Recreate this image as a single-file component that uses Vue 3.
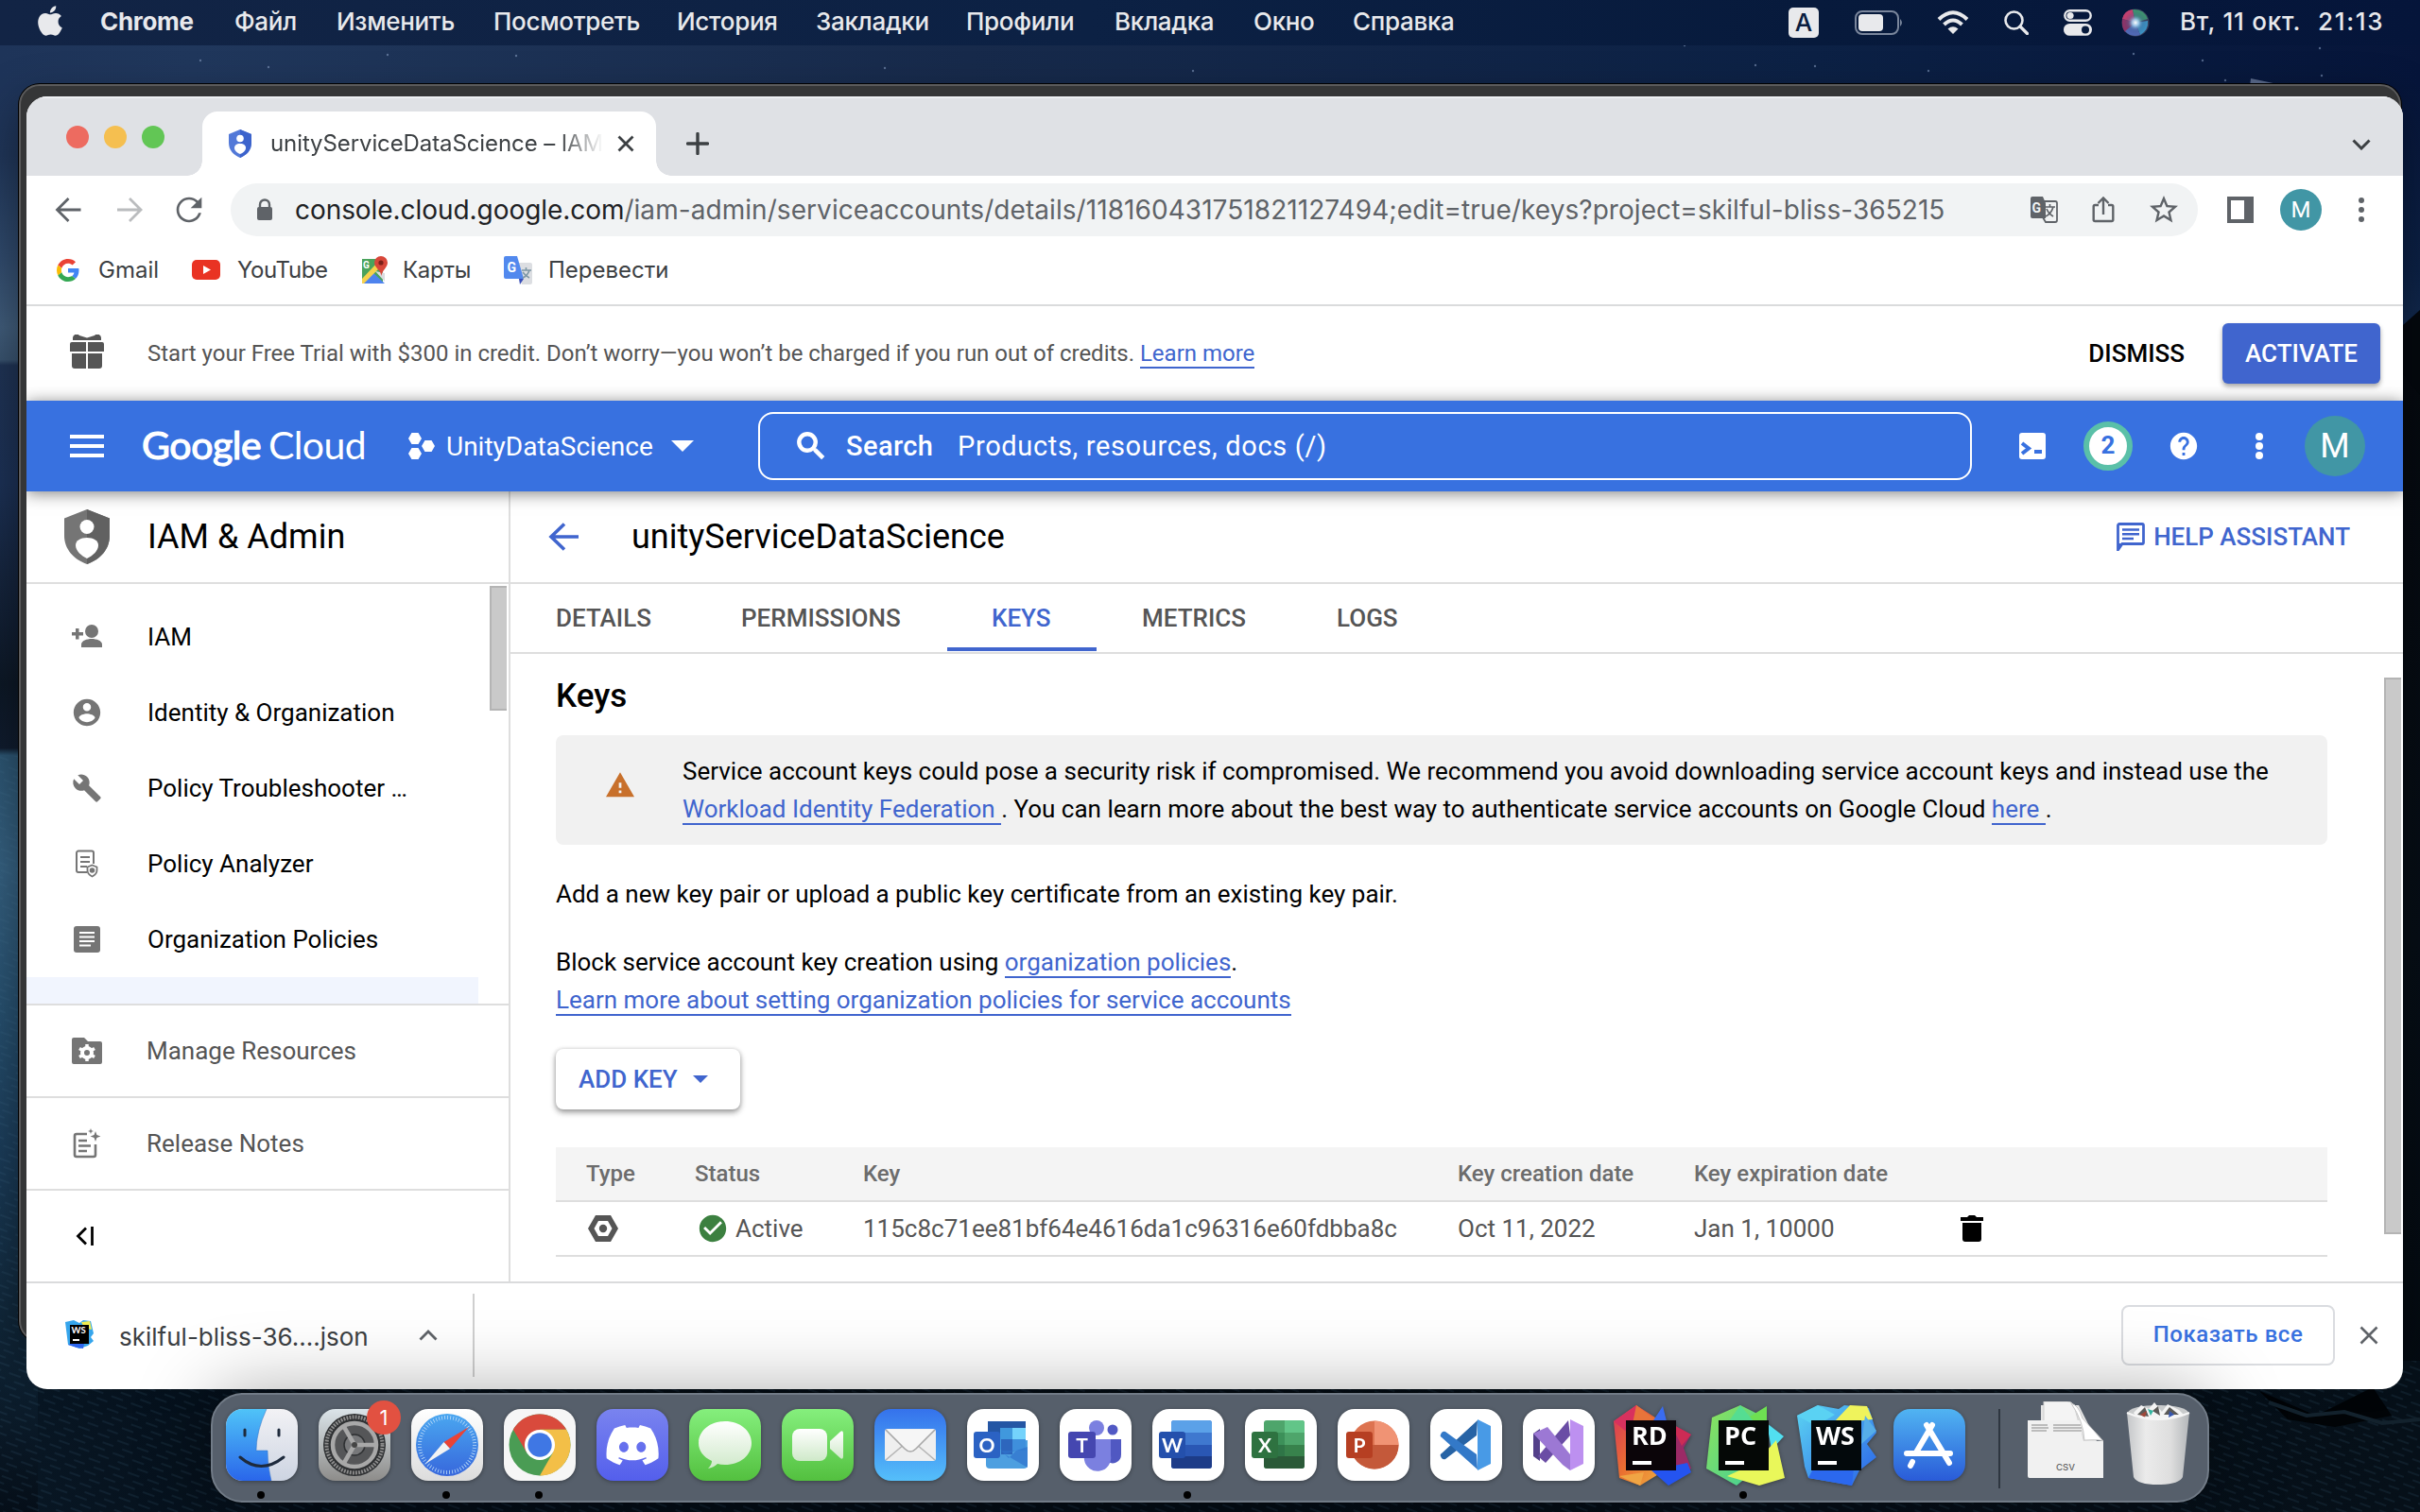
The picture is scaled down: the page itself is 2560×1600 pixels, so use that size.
<script setup>
const menu = ['Файл', 'Изменить', 'Посмотреть', 'История', 'Закладки', 'Профили', 'Вкладка', 'Окно', 'Справка']
const tabs = ['DETAILS', 'PERMISSIONS', 'KEYS', 'METRICS', 'LOGS']
const running = [0, 2, 3, 10, 16]
const slots = Array.from({ length: 19 }, (_, i) => i)
const stars = [[212, 64], [284, 71], [410, 58], [546, 59], [936, 72], [1262, 75], [1782, 48], [1857, 69], [1920, 70], [2040, 75], [2257, 57], [2330, 64], [2454, 51], [2456, 80], [2354, 85]]
</script>

<template>
  <div class="desktop">
    <svg class="wallpaper" width="2560" height="1600" viewBox="0 0 2560 1600">
      <defs>
        <linearGradient id="skyx" x1="0" x2="1" y1="0" y2="0">
          <stop offset="0" stop-color="#1e3459" /><stop offset=".08" stop-color="#20375c" /><stop offset=".4" stop-color="#172a4b" /><stop offset=".75" stop-color="#0c2145" /><stop offset="1" stop-color="#06153a" />
        </linearGradient>
        <linearGradient id="leftEdge" x1="0" x2="0" y1="0" y2="1">
          <stop offset="0" stop-color="#1e3459" /><stop offset=".05" stop-color="#203659" /><stop offset=".12" stop-color="#304a6c" />
          <stop offset=".17" stop-color="#405c7a" /><stop offset=".193" stop-color="#39536f" /><stop offset=".197" stop-color="#1f3354" />
          <stop offset=".28" stop-color="#1c3155" /><stop offset=".35" stop-color="#15243c" /><stop offset=".42" stop-color="#0d1826" />
          <stop offset=".465" stop-color="#101c2e" /><stop offset=".47" stop-color="#2c5471" /><stop offset=".55" stop-color="#356080" />
          <stop offset=".65" stop-color="#27506f" /><stop offset=".75" stop-color="#1b3c59" /><stop offset=".86" stop-color="#11283b" /><stop offset="1" stop-color="#050e18" />
        </linearGradient>
        <linearGradient id="rightEdge" x1="0" x2="0" y1="0" y2="1">
          <stop offset="0" stop-color="#06153a" /><stop offset=".13" stop-color="#0c2145" /><stop offset=".19" stop-color="#152e52" />
          <stop offset=".2" stop-color="#05090f" /><stop offset=".6" stop-color="#060e16" /><stop offset="1" stop-color="#03090f" />
        </linearGradient>
        <linearGradient id="sea" x1="0" x2="1" y1="0" y2="0">
          <stop offset="0" stop-color="#081623" /><stop offset=".12" stop-color="#040d17" /><stop offset=".5" stop-color="#040c15" /><stop offset="1" stop-color="#061019" />
        </linearGradient>
        <pattern id="ripple" width="22" height="14" patternUnits="userSpaceOnUse" patternTransform="rotate(20)">
          <path d="M0 4h13M8 11h12" stroke="#4f7c99" stroke-opacity=".13" stroke-width="2" />
        </pattern>
      </defs>
      <rect y="89" width="60" height="1511" fill="url(#leftEdge)" />
      <rect x="2500" y="89" width="60" height="1511" fill="url(#rightEdge)" />
      <rect width="2560" height="90" fill="url(#skyx)" />
      <path d="M2530 380l12-36 18-16v90z" fill="#04080e" />
      <rect y="1440" x="40" width="2520" height="160" fill="url(#sea)" />
      <rect y="1440" width="2560" height="160" fill="url(#ripple)" />
      <rect y="800" width="60" height="640" fill="url(#ripple)" />
      <path d="M2390 1472l60 26 60-30 20 30-60 12-50-8z" fill="#010407" /><path d="M2400 1484l40 14 40-4 40 12 40-4" stroke="#13222d" stroke-width="4" fill="none" />
      <path d="M2381 83l38 8h-39z" fill="#586889" />
      <circle v-for="(s, i) in stars" :key="i" :cx="s[0]" :cy="s[1]" r="1.2" fill="#8ea6c8" opacity=".55" />
    </svg>

    <header class="menubar">
      <svg class="apple" width="30" height="34" viewBox="2 -1 20 26"><path fill="#e8e9ec" d="M12.152 6.896c-.948 0-2.415-1.078-3.96-1.04-2.04.027-3.91 1.183-4.961 3.014-2.117 3.675-.546 9.103 1.519 12.09 1.013 1.454 2.208 3.09 3.792 3.039 1.52-.065 2.09-.987 3.935-.987 1.831 0 2.35.987 3.96.948 1.637-.026 2.676-1.48 3.676-2.948 1.156-1.688 1.636-3.325 1.662-3.415-.039-.013-3.182-1.221-3.22-4.857-.026-3.04 2.48-4.494 2.597-4.559-1.429-2.09-3.623-2.324-4.39-2.376-2-.156-3.675 1.09-4.61 1.09zM15.53 3.83c.843-1.012 1.4-2.427 1.245-3.83-1.207.052-2.662.805-3.532 1.818-.78.896-1.454 2.338-1.273 3.714 1.338.104 2.715-.688 3.559-1.701" /></svg>
      <nav class="menus">
        <b>Chrome</b>
        <span v-for="m in menu" :key="m">{{ m }}</span>
      </nav>
      <div class="status">
        <span class="lang">A</span>
        <svg width="52" height="26" viewBox="0 0 52 26"><rect x="1" y="1" width="45" height="24" rx="7" fill="none" stroke="#7a869c" stroke-width="2" /><rect x="4" y="4" width="26" height="18" rx="4" fill="#e8e9ec" /><path d="M48 9q4 4 0 8z" fill="#7a869c" /></svg>
        <svg width="34" height="26" viewBox="0 0 34 26" fill="none" stroke="#e8e9ec" stroke-width="4"><path d="M2 9.500Q17-5 32 9.500M7.500 15Q17 6 26.500 15" /><path d="M17 25l-5.500-5.500q5.500-4.500 11 0z" fill="#e8e9ec" stroke="none" /></svg>
        <svg width="26" height="26" viewBox="0 0 26 26" fill="none" stroke="#e8e9ec" stroke-width="2.600"><circle cx="10.500" cy="10.500" r="9" /><path d="M17 17l7.500 7.500" stroke-width="3.200" stroke-linecap="round" /></svg>
        <svg width="30" height="28" viewBox="0 0 30 28"><rect x="1.300" y="1.300" width="27.400" height="10.400" rx="5.200" fill="none" stroke="#e8e9ec" stroke-width="2.400" /><circle cx="7" cy="6.500" r="3.600" fill="#e8e9ec" /><rect y="15" width="30" height="12.800" rx="6.400" fill="#e8e9ec" /><circle cx="23" cy="21.400" r="4" fill="#071a3c" /></svg>
        <svg width="30" height="30" viewBox="0 0 30 30">
          <defs><radialGradient id="siri"><stop offset="0" stop-color="#fff" /><stop offset=".3" stop-color="#9cc9ea" stop-opacity=".9" /><stop offset=".65" stop-color="#466d9d" stop-opacity=".3" /><stop offset="1" stop-color="#2a4a80" stop-opacity="0" /></radialGradient></defs>
          <circle cx="15" cy="15" r="14.500" fill="#39405e" /><path d="M15 15L1 11Q3 2 12 1z" fill="#c04070" /><path d="M15 15L12 1q12-1 16 10z" fill="#3e8f70" /><path d="M15 15L4 25Q0 20 1 11z" fill="#8b3468" /><path d="M15 15l13-2q1 10-8 15z" fill="#3c8fc0" /><path d="M15 15l5 13q-10 3-16-4z" fill="#5068b4" /><circle cx="15" cy="15" r="12" fill="url(#siri)" />
        </svg>
        <span class="date">Вт, 11 окт.</span><span class="time">21:13</span>
      </div>
    </header>

    <div class="backwin"></div>

    <main class="win">
      <div class="strip">
        <div class="lights"><i class="r"></i><i class="y"></i><i class="g"></i></div>
        <div class="tab">
          <svg width="26" height="30" viewBox="0 0 26 30"><path d="M13 0l12 5v9c0 8-5 13-12 16C6 27 1 22 1 14V5z" fill="#5379d8" /><path d="M13 0l12 5v9c0 8-5 13-12 16z" fill="#3c63cc" /><circle cx="13" cy="9.500" r="3.800" fill="#fff" /><path d="M13 15c4 0 6 2 6 4.500 0 3-3 5.500-6 6.500-3-1-6-3.500-6-6.500C7 17 9 15 13 15z" fill="#fff" /></svg>
          <span class="tabtitle">unityServiceDataScience – IAM</span>
          <svg class="tabx" width="18" height="18" viewBox="0 0 18 18" stroke="#3c4043" stroke-width="2.800"><path d="M1.500 1.500l15 15M16.500 1.500l-15 15" /></svg>
        </div>
        <svg class="plus" width="24" height="24" viewBox="0 0 24 24" stroke="#3c4043" stroke-width="3.400" stroke-linecap="round"><path d="M12 1.500v21M1.500 12h21" /></svg>
        <svg class="chev" width="20" height="12" viewBox="0 0 20 12" fill="none" stroke="#3c4043" stroke-width="3"><path d="M1.500 1.500L10 10l8.500-8.500" /></svg>
      </div>

      <div class="toolbar">
        <svg width="40" height="40" viewBox="0 0 40 40" fill="none" stroke="#5f6368" stroke-width="2.800"><path d="M33.500 20H8.500M20.500 8L8.500 20l12 12" /></svg>
        <svg width="40" height="40" viewBox="0 0 40 40" fill="none" stroke="#babcbe" stroke-width="2.800"><path d="M7 20h25M20 8l12 12-12 12" /></svg>
        <svg width="40" height="40" viewBox="0 0 24 24" fill="#5f6368"><path d="M17.650 6.350C16.200 4.900 14.210 4 12 4c-4.420 0-7.990 3.580-7.990 8s3.570 8 7.990 8c3.730 0 6.840-2.550 7.730-6h-1.700c-.82 2.500-3.200 4.400-6.030 4.400-3.500 0-6.400-2.900-6.400-6.400s2.900-6.400 6.400-6.400c1.800 0 3.400.75 4.520 1.900L13 11h7V4l-2.350 2.350z" /></svg>
        <div class="omni">
          <svg width="20" height="24" viewBox="0 0 20 24"><path d="M5 10V6.500a5 5 0 0110 0V10" fill="none" stroke="#5f6368" stroke-width="2.400" /><rect x="2" y="9" width="16" height="14" rx="2" fill="#5f6368" /></svg>
          <span class="url"><em>console.cloud.google.com</em><span>/iam-admin/serviceaccounts/details/118160431751821127494;edit=true/keys?project=skilful-bliss-365215</span></span>
          <svg width="30" height="30" viewBox="0 0 30 30"><path d="M3 1h11l3 7v16H3a2 2 0 01-2-2V3a2 2 0 012-2z" fill="#5f6368" /><path d="M15 6h12a2 2 0 012 2v18a2 2 0 01-2 2H17l-3-5" fill="none" stroke="#5f6368" stroke-width="1.800" /><text x="2.500" y="18" font-size="14" font-weight="700" fill="#f1f3f4" font-family="Roboto, sans-serif">G</text><path d="M16 12h11M21.500 9v3M25 12q-2 7-8 10M18 14q2 5 7 8" stroke="#5f6368" stroke-width="1.700" fill="none" /></svg>
          <svg width="24" height="30" viewBox="0 0 24 30" fill="none" stroke="#5f6368" stroke-width="2.400"><path d="M7 10H3.200a1.500 1.500 0 00-1.500 1.500v14A1.500 1.500 0 003.200 27h17.600a1.500 1.500 0 001.500-1.500v-14a1.500 1.500 0 00-1.500-1.500H17M12 20V3M6.500 8L12 2.500 17.500 8" /></svg>
          <svg width="36" height="36" viewBox="0 0 24 24" fill="#5f6368"><path d="M22 9.240l-7.190-.62L12 2 9.190 8.630 2 9.240l5.460 4.730L5.820 21 12 17.270 18.180 21l-1.630-7.030L22 9.240zM12 15.400l-3.760 2.270 1-4.280-3.320-2.880 4.380-.38L12 6.100l1.710 4.040 4.380.38-3.320 2.880 1 4.280L12 15.400z" /></svg>
        </div>
        <svg width="28" height="28" viewBox="0 0 28 28"><path d="M2 2h24v24H2z" fill="none" stroke="#5f6368" stroke-width="4" /><path d="M18 2h8v24h-8z" fill="#5f6368" /></svg>
        <span class="ava small">M</span>
        <svg width="8" height="28" viewBox="0 0 8 28" fill="#5f6368"><circle cx="4" cy="4" r="3" /><circle cx="4" cy="14" r="3" /><circle cx="4" cy="24" r="3" /></svg>
      </div>

      <div class="bookmarks">
        <svg width="24" height="24" viewBox="0 0 48 48"><path fill="#ea4335" d="M24 9.500c3.540 0 6.710 1.220 9.210 3.600l6.850-6.850C35.900 2.380 30.470 0 24 0 14.620 0 6.510 5.380 2.560 13.220l7.980 6.190C12.430 13.720 17.740 9.500 24 9.500z" /><path fill="#4285f4" d="M46.980 24.550c0-1.570-.15-3.090-.38-4.550H24v9.020h12.940c-.58 2.960-2.260 5.480-4.780 7.180l7.730 6c4.510-4.180 7.090-10.360 7.090-17.650z" /><path fill="#fbbc05" d="M10.530 28.590c-.48-1.450-.76-2.990-.76-4.590s.27-3.140.76-4.590l-7.980-6.190C.92 16.460 0 20.120 0 24c0 3.880.92 7.540 2.560 10.780l7.970-6.190z" /><path fill="#34a853" d="M24 48c6.480 0 11.930-2.130 15.890-5.810l-7.730-6c-2.150 1.450-4.920 2.300-8.160 2.300-6.260 0-11.570-4.220-13.470-9.910l-7.980 6.190C6.510 42.620 14.620 48 24 48z" /></svg>
        <span class="gm">Gmail</span>
        <svg width="30" height="22" viewBox="0 0 30 22"><rect width="30" height="21" rx="5" fill="#e93323" /><path d="M12 6l8 4.500-8 4.500z" fill="#fff" /></svg>
        <span class="yt">YouTube</span>
        <svg width="30" height="30" viewBox="0 0 30 30"><path d="M2 3h22v26H2z" fill="#4aa35c" /><path d="M2 29l11-12 13 12z" fill="#4e83ee" /><path d="M2 24L20 5l4 4L4 29H2z" fill="#f7d24c" /><path d="M16 16l10 11v-9z" fill="#dadce0" /><path d="M22 0a7 7 0 017 7c0 5-6 8-6.500 14C22 15 15 12 15 7a7 7 0 017-7z" fill="#d8473a" /><circle cx="22" cy="7" r="2.600" fill="#7c2019" /><text x="3" y="13" font-size="10" font-weight="700" fill="#fff" font-family="Roboto, sans-serif">G</text></svg>
        <span class="mp">Карты</span>
        <svg width="30" height="30" viewBox="0 0 30 30"><path d="M12 7h16a2 2 0 012 2v19a2 2 0 01-2 2H19z" fill="#dcdee2" /><path d="M2 0h12l7 24H2a2 2 0 01-2-2V2a2 2 0 012-2z" fill="#5289ee" /><path d="M16 24h5l-4 6z" fill="#3a50b8" /><path d="M19 15h10M23.500 12v3M27 15q-2 6-7 8M20 17q3 4 7 6" stroke="#7d97a5" stroke-width="1.600" fill="none" /><text x="3.500" y="17" font-size="14" font-weight="700" fill="#fff" font-family="Roboto, sans-serif">G</text></svg>
        <span class="trn">Перевести</span>
      </div>

      <div class="promo">
        <svg width="36" height="36" viewBox="0 0 36 36" fill="#555"><path d="M3 4a4 4 0 017-3l8 2.500L26 1a4 4 0 017 3v2H3z" /><path d="M2 8h15v10H0v-8a2 2 0 012-2zM19 8h15a2 2 0 012 2v8H19zM2 20h15v16H5a3 3 0 01-3-3zM19 20h15v13a3 3 0 01-3 3H19z" /></svg>
        <span class="promotext">Start your Free Trial with $300 in credit. Don’t worry—you won’t be charged if you run out of credits. <a>Learn more</a></span>
        <span class="dismiss">DISMISS</span>
        <span class="activate">ACTIVATE</span>
      </div>

      <div class="cloudbar">
        <div class="burger"><i></i><i></i><i></i></div>
        <div class="logo"><b>Google</b><span>Cloud</span></div>
        <svg class="proj" width="28" height="28" viewBox="0 0 28 28" fill="#fff"><path d="M3.500 0h7L14 6l-3.500 6h-7L0 6zM3.500 16h7l3.500 6-3.500 6h-7L0 22zM17.500 8h7L28 14l-3.500 6h-7L14 14z" /></svg>
        <span class="projname">UnityDataScience</span>
        <svg width="24" height="12" viewBox="0 0 24 12" fill="#fff"><path d="M0 0h24L12 12z" /></svg>
        <div class="search">
          <svg width="38" height="38" viewBox="0 0 24 24" fill="#fff" stroke="#fff" stroke-width=".8"><path d="M15.500 14h-.79l-.28-.27C15.410 12.590 16 11.110 16 9.500 16 5.910 13.090 3 9.500 3S3 5.910 3 9.500 5.910 16 9.500 16c1.610 0 3.090-.59 4.230-1.570l.27.28v.79l5 4.990L20.490 19l-4.990-5zm-6 0C7.010 14 5 11.990 5 9.500S7.010 5 9.500 5 14 7.010 14 9.500 11.990 14 9.500 14z" /></svg>
          <b>Search</b><span>Products, resources, docs (/)</span>
        </div>
        <svg width="28" height="28" viewBox="0 0 28 28"><rect width="28" height="28" rx="3" fill="#fff" /><path d="M3 11l7 5.500L3 22" fill="none" stroke="#3871e0" stroke-width="4" /><path d="M16 18h8v4h-8z" fill="#3871e0" /></svg>
        <span class="badge">2</span>
        <svg width="34" height="34" viewBox="0 0 24 24" fill="#fff"><path d="M12 2C6.480 2 2 6.480 2 12s4.480 10 10 10 10-4.480 10-10S17.520 2 12 2zm1 17h-2v-2h2v2zm2.070-7.750l-.9.92C13.450 12.900 13 13.500 13 15h-2v-.5c0-1.100.45-2.100 1.170-2.830l1.240-1.260c.37-.36.59-.86.59-1.410 0-1.100-.9-2-2-2s-2 .9-2 2H8c0-2.210 1.790-4 4-4s4 1.790 4 4c0 .88-.36 1.680-.93 2.250z" /></svg>
        <svg width="10" height="30" viewBox="0 0 10 30" fill="#fff"><circle cx="5" cy="5" r="4" /><circle cx="5" cy="15" r="4" /><circle cx="5" cy="25" r="4" /></svg>
        <span class="ava big">M</span>
      </div>

      <div class="body">
        <aside class="side">
          <div class="sidehead">
            <svg width="48" height="58" viewBox="0 0 48 58"><path d="M24 0l24 9.500V28c0 14-10 25-24 30C10 53 0 42 0 28V9.500z" fill="#757575" /><path d="M24 0l24 9.500V28c0 14-10 25-24 30z" fill="#616161" /><circle cx="24" cy="18.500" r="7.500" fill="#fff" /><path d="M24 30c7 0 12 3 12 8 0 6-6 11-12 14-6-3-12-8-12-14 0-5 5-8 12-8z" fill="#fff" /></svg>
            <span>IAM &amp; Admin</span>
          </div>
          <div class="sidelist">
            <ul>
              <li><svg width="36" height="36" viewBox="0 0 36 36" fill="#757575"><circle cx="23" cy="12" r="7" /><path d="M12 29v-3c0-4 6-6 11-6s11 2 11 6v3z" /><path d="M2 13h4V9h3.500v4H14v3.500H9.500v4H6v-4H2z" /></svg>IAM</li>
              <li><svg width="34" height="34" viewBox="0 0 24 24" fill="#757575"><path d="M12 2C6.480 2 2 6.480 2 12s4.480 10 10 10 10-4.480 10-10S17.520 2 12 2zm0 3c1.660 0 3 1.340 3 3s-1.340 3-3 3-3-1.340-3-3 1.340-3 3-3zm0 14.200c-2.500 0-4.710-1.280-6-3.220.03-1.990 4-3.080 6-3.080 1.990 0 5.970 1.090 6 3.080-1.290 1.940-3.500 3.220-6 3.220z" /></svg>Identity &amp; Organization</li>
              <li><svg width="32" height="32" viewBox="0 0 24 24" fill="#757575"><path d="M22.700 19l-9.100-9.100c.9-2.300.4-5-1.500-6.900-2-2-5-2.400-7.400-1.300L9 6 6 9 1.600 4.700C.4 7.100.9 10.100 2.900 12.100c1.900 1.900 4.600 2.400 6.900 1.500l9.100 9.100c.4.4 1 .4 1.400 0l2.300-2.300c.5-.4.5-1.100.1-1.400z" /></svg>Policy Troubleshooter …</li>
              <li><svg width="26" height="30" viewBox="0 0 26 30" fill="none" stroke="#757575" stroke-width="2"><path d="M13 24H4a2 2 0 01-2-2V3.500a2 2 0 012-2h14a2 2 0 012 2V15M6 8h10M6 13h10M6 18h7" /><path d="M18.500 16.500l5 2v3.500c0 3-2 5-5 6.500-3-1.500-5-3.500-5-6.500v-3.500z" stroke-width="1.800" /><circle cx="18.500" cy="22" r="1.800" fill="#757575" /></svg>Policy Analyzer</li>
              <li><svg width="28" height="28" viewBox="0 0 28 28"><rect width="28" height="28" rx="3" fill="#757575" /><path d="M6 7h16M6 11.500h16M6 16h16M6 20.500h12" stroke="#fff" stroke-width="2" /></svg>Organization Policies</li>
              <li class="sel"></li>
            </ul>
            <i class="thumb"></i>
          </div>
          <div class="foot"><svg width="32" height="30" viewBox="0 0 32 30"><path d="M0 3a2 2 0 012-2h11l4 4h13a2 2 0 012 2v20a2 2 0 01-2 2H2a2 2 0 01-2-2z" fill="#757575" /><circle cx="16" cy="17" r="5" fill="none" stroke="#fff" stroke-width="4" /><path d="M16 8v4M16 22v4M8 12.500l3.500 2M20.500 19.500l3.500 2M8 21.500l3.500-2M20.500 14.500l3.500-2" stroke="#fff" stroke-width="3.500" /></svg><span>Manage Resources</span></div>
          <div class="foot"><svg width="30" height="32" viewBox="0 0 30 32"><path d="M15 6H4a2 2 0 00-2 2v20a2 2 0 002 2h18a2 2 0 002-2V17" fill="none" stroke="#757575" stroke-width="2.600" /><path d="M6 13h9M6 18.500h13M6 24h9" stroke="#757575" stroke-width="2.600" /><path d="M24 3l1.400 4 4 1.500-4 1.500L24 14l-1.400-4-4-1.500 4-1.500zM19 0l.8 2.200L22 3l-2.200.8L19 6l-.8-2.200L16 3l2.200-.8z" fill="#757575" /></svg><span>Release Notes</span></div>
          <div class="foot last"><svg width="20" height="20" viewBox="0 0 20 20" fill="none" stroke="#000" stroke-width="2.800"><path d="M11 1.500L2.500 10l8.500 8.500M17.500 0v20" /></svg></div>
        </aside>

        <section class="page">
          <div class="pagehead">
            <svg width="32" height="30" viewBox="0 0 32 30" fill="none" stroke="#4065ce" stroke-width="3.600"><path d="M32 15H3M17 1.500L3 15l14 13.500" /></svg>
            <h1>unityServiceDataScience</h1>
            <svg width="30" height="30" viewBox="0 0 30 30"><path d="M1.500 29V3A1.500 1.500 0 013 1.500h24A1.500 1.500 0 0128.500 3v18a1.500 1.500 0 01-1.500 1.500H6z" fill="none" stroke="#4065ce" stroke-width="2.800" /><path d="M1 22h6l-6 7z" fill="#4065ce" /><path d="M6 7.500h18M6 12.200h18M6 17h12" stroke="#4065ce" stroke-width="2.600" /></svg>
            <span class="help">HELP ASSISTANT</span>
          </div>
          <nav class="tabs"><span v-for="t in tabs" :key="t" :class="[t.toLowerCase(), { on: t === 'KEYS' }]">{{ t }}</span></nav>
          <div class="content">
            <h2>Keys</h2>
            <div class="notice">
              <svg width="30" height="30" viewBox="1 1 22 22" fill="#c8702b"><path d="M1 21h22L12 2 1 21zm12-3h-2v-2h2v2zm0-4h-2v-4h2v4z" /></svg>
              <div>
                <p class="n1">Service account keys could pose a security risk if compromised. We recommend you avoid downloading service account keys and instead use the</p>
                <p class="n2"><a>Workload Identity Federation </a>. You can learn more about the best way to authenticate service accounts on Google Cloud <a>here </a>.</p>
              </div>
            </div>
            <p class="p1">Add a new key pair or upload a public key certificate from an existing key pair.</p>
            <p class="p2">Block service account key creation using <a>organization policies</a>.</p>
            <p class="p3"><a>Learn more about setting organization policies for service accounts</a></p>
            <div class="addkey"><span>ADD KEY</span><svg width="16" height="8" viewBox="0 0 16 8" fill="#4065ce"><path d="M0 0h16L8 8z" /></svg></div>
            <div class="table">
              <div class="tr head"><span>Type</span><span>Status</span><span>Key</span><span>Key creation date</span><span>Key expiration date</span></div>
              <div class="tr row">
                <span><svg class="hex" width="32" height="28" viewBox="0 0 32 28"><path fill-rule="evenodd" fill="#555" d="M8 0h16l8 14-8 14H8L0 14zM11 6L6.500 14 11 22h10l4.500-8L21 6z" /><circle cx="16" cy="14" r="4.200" fill="#555" /></svg></span>
                <span class="act"><svg width="34" height="34" viewBox="0 0 24 24"><path fill="#3c8040" d="M12 2C6.480 2 2 6.480 2 12s4.480 10 10 10 10-4.480 10-10S17.520 2 12 2zm-2 15l-5-5 1.410-1.410L10 14.170l7.590-7.590L19 8l-9 9z" /></svg><span>Active</span></span>
                <span class="key">115c8c71ee81bf64e4616da1c96316e60fdbba8c</span><span class="d1">Oct 11, 2022</span><span class="d2">Jan 1, 10000</span>
                <svg width="26" height="28" viewBox="0 0 26 28"><path d="M1 2h7l2-2h6l2 2h7v4H1zM3 8h20v17a3 3 0 01-3 3H6a3 3 0 01-3-3z" /></svg>
              </div>
            </div>
            <i class="bigthumb"></i>
          </div>
        </section>
      </div>

      <div class="downloads">
        <svg class="wsmini" width="30" height="30" viewBox="0 0 30 30"><path d="M0 2l9-2 6 3 4-3 8 1 3 13-3 4 3 4-6 5-9 3-8-3-4-1z" fill="#35a5ec" /><path d="M17 2l9-1 2 9-8-2z" fill="#f1ec50" /><path d="M3 26l7-3 10 2-1 5-7-1z" fill="#2e66ee" /><rect x="5" y="5" width="20" height="20" /><text x="6.500" y="14" font-size="9.500" font-weight="700" fill="#fff" font-family="Lato, sans-serif">WS</text><path d="M8 21h7" stroke="#fff" stroke-width="1.800" /></svg>
        <span class="file">skilful-bliss-36....json</span>
        <svg width="20" height="12" viewBox="0 0 20 12" fill="none" stroke="#5f6368" stroke-width="2.800"><path d="M1.500 10.500L10 2l8.500 8.500" /></svg>
        <i class="vline"></i>
        <span class="showall">Показать все</span>
        <svg width="20" height="20" viewBox="0 0 20 20" stroke="#5f6368" stroke-width="2.600"><path d="M1.500 1.500l17 17M18.500 1.500l-17 17" /></svg>
      </div>
    </main>

    <footer class="dock">
      <svg width="0" height="0" class="defs">
        <defs>
          <linearGradient id="gBlue" x2="0" y2="1"><stop stop-color="#4fc3f8" /><stop offset="1" stop-color="#2a66ea" /></linearGradient>
          <linearGradient id="gGrey" x2="0" y2="1"><stop stop-color="#f2f2f5" /><stop offset="1" stop-color="#cdd4e2" /></linearGradient>
          <linearGradient id="gSys" x2="0" y2="1"><stop stop-color="#dbe4e9" /><stop offset="1" stop-color="#8d8c8a" /></linearGradient>
          <linearGradient id="gWhite" x2="0" y2="1"><stop stop-color="#fff" /><stop offset="1" stop-color="#dcdcdc" /></linearGradient>
          <linearGradient id="gSaf" x2="0" y2="1"><stop stop-color="#4aa7f0" /><stop offset="1" stop-color="#3767dc" /></linearGradient>
          <linearGradient id="gDis" x2="0" y2="1"><stop stop-color="#7983ef" /><stop offset="1" stop-color="#545fec" /></linearGradient>
          <linearGradient id="gGreen" x2="0" y2="1"><stop stop-color="#85ef7d" /><stop offset="1" stop-color="#53c03f" /></linearGradient>
          <linearGradient id="gBub" x2="0" y2="1"><stop stop-color="#fff" /><stop offset="1" stop-color="#cfe9c9" /></linearGradient>
          <linearGradient id="gMail" x2="0" y2="1"><stop stop-color="#3572ec" /><stop offset="1" stop-color="#55bffa" /></linearGradient>
          <linearGradient id="gApp" x2="0" y2="1"><stop stop-color="#50b4f2" /><stop offset="1" stop-color="#2a5bd8" /></linearGradient>
          <linearGradient id="gTrash" x2="1" y2="0"><stop stop-color="#c4c6c8" /><stop offset=".3" stop-color="#ebebeb" /><stop offset=".7" stop-color="#dedede" /><stop offset="1" stop-color="#b4b7ba" /></linearGradient>
          <linearGradient id="gRd" x2="1" y2="1"><stop stop-color="#d8315e" /><stop offset=".5" stop-color="#ea7030" /><stop offset="1" stop-color="#f0b040" /></linearGradient>
          <linearGradient id="gPc" x2="1" y2="1"><stop stop-color="#8fe35a" /><stop offset="1" stop-color="#3fce9a" /></linearGradient>
          <linearGradient id="gWs" x2="1" y2="1"><stop stop-color="#5cd5f2" /><stop offset="1" stop-color="#2a62e8" /></linearGradient>
        </defs>
      </svg>
      <div v-for="i in slots" :key="i" class="slot">
        <svg width="76" height="76" viewBox="0 0 76 76">
          <template v-if="i === 0">
            <rect width="76" height="76" rx="18" fill="url(#gGrey)" /><path d="M18 0H43Q32 24 32 44H44Q44 60 48 76H18A18 18 0 010 58V18A18 18 0 0118 0z" fill="url(#gBlue)" />
            <path d="M43 0Q32 24 32 44H44Q44 60 48 76" stroke="#2d6fc4" stroke-width="1" stroke-opacity=".5" fill="none" />
            <path d="M20 22v6M56 22v6M15 51Q37 70 61 51" stroke="#1e2a3c" stroke-width="3" stroke-linecap="round" fill="none" />
          </template>
          <template v-else-if="i === 1">
            <rect width="76" height="76" rx="18" fill="url(#gSys)" /><circle cx="38" cy="38" r="33" fill="#2f3133" /><circle cx="38" cy="38" r="29.500" fill="none" stroke="#8e8e8e" stroke-width="4" stroke-dasharray="1.800 1.300" /><circle cx="38" cy="38" r="23" fill="#555658" stroke="#a8a8a8" stroke-width="4.500" /><circle cx="38" cy="38" r="11" fill="#77787a" stroke="#2f3133" stroke-width="1.500" /><path d="M38 38h22M38 38L27 19M38 38L27 57" stroke="#a8a8a8" stroke-width="4.500" /><circle cx="38" cy="38" r="3" fill="#444" />
          </template>
          <template v-else-if="i === 2">
            <rect width="76" height="76" rx="18" fill="url(#gWhite)" /><circle cx="38" cy="38" r="33" fill="url(#gSaf)" /><circle cx="38" cy="38" r="29" fill="none" stroke="#bcdcf8" stroke-width="4" stroke-dasharray=".8 2.237" /><path d="M61 19L34.500 35l6.500 7z" fill="#ea4335" /><path d="M15 58L34.500 35l6.500 7z" fill="#f3f3f3" />
          </template>
          <template v-else-if="i === 3">
            <rect width="76" height="76" rx="18" fill="#f6f6f6" /><circle cx="38" cy="38" r="32.500" fill="#4a9c54" /><path d="M9.900 21.700A32.500 32.500 0 0166.100 21.700H38L24 46z" fill="#d94a3c" /><path d="M66.100 21.700A32.500 32.500 0 0138 70.500L52 46 38 21.700z" fill="#f3bf47" /><circle cx="38" cy="38" r="16" fill="#fff" /><circle cx="38" cy="38" r="12.700" fill="#3f77e4" />
          </template>
          <template v-else-if="i === 4">
            <rect width="76" height="76" rx="18" fill="url(#gDis)" /><path transform="translate(10.500 10.500) scale(2.300)" fill="#fff" d="M20.317 4.370a19.790 19.790 0 00-4.885-1.515.074.074 0 00-.079.037c-.211.375-.445.865-.608 1.250-1.845-.276-3.680-.276-5.487 0-.164-.393-.406-.874-.618-1.250a.077.077 0 00-.078-.037 19.736 19.736 0 00-4.885 1.515.07.07 0 00-.032.028C.533 9.046-.319 13.580.099 18.058a.082.082 0 00.031.056c2.053 1.508 4.041 2.423 5.993 3.029a.078.078 0 00.084-.028c.462-.63.873-1.295 1.226-1.994a.076.076 0 00-.042-.106c-.653-.248-1.274-.55-1.872-.892a.077.077 0 01-.008-.128c.126-.094.252-.192.372-.291a.074.074 0 01.078-.011c3.928 1.793 8.180 1.793 12.061 0a.074.074 0 01.079.01c.12.099.246.198.373.292a.077.077 0 01-.007.128 12.299 12.299 0 01-1.873.891.077.077 0 00-.041.107c.36.698.772 1.363 1.225 1.993a.076.076 0 00.084.029c1.961-.607 3.950-1.522 6.002-3.029a.077.077 0 00.031-.055c.5-5.177-.838-9.674-3.548-13.660a.061.061 0 00-.031-.029zM8.020 15.331c-1.183 0-2.157-1.086-2.157-2.419 0-1.333.956-2.419 2.157-2.419 1.211 0 2.176 1.095 2.157 2.419 0 1.333-.956 2.419-2.157 2.419zm7.975 0c-1.183 0-2.157-1.086-2.157-2.419 0-1.333.955-2.419 2.157-2.419 1.211 0 2.176 1.095 2.157 2.419 0 1.333-.946 2.419-2.157 2.419z" />
          </template>
          <template v-else-if="i === 5">
            <rect width="76" height="76" rx="18" fill="url(#gGreen)" /><path d="M38 13c16 0 28 10 28 23S54 59 38 59q-5 0-8-1-4 4-10 5 4-4 4-8C15 51 10 44 10 36c0-13 12-23 28-23z" fill="url(#gBub)" />
          </template>
          <template v-else-if="i === 6">
            <rect width="76" height="76" rx="18" fill="url(#gGreen)" /><rect x="11" y="21" width="37" height="34" rx="8" fill="url(#gBub)" /><path d="M51 34l11-10q3-2 3 2v24q0 4-3 2L51 42z" fill="url(#gBub)" />
          </template>
          <template v-else-if="i === 7">
            <rect width="76" height="76" rx="18" fill="url(#gMail)" /><rect x="11" y="21" width="54" height="34" rx="3" fill="#efefef" /><path d="M12 54l20-17M64 54L44 37" stroke="#b5b5b5" stroke-width="1.600" /><path d="M12 22l20 20q6 6 12 0l20-20" fill="#f6f6f6" stroke="#a8a8a8" stroke-width="1.600" />
          </template>
          <template v-else-if="i === 8">
            <rect width="76" height="76" rx="18" fill="#fff" /><path d="M22 13h40v18H22z" fill="#2456a4" /><path d="M20 37l44-4v26a4 4 0 01-4 4H24a4 4 0 01-4-4z" fill="#4d9fe0" /><path d="M35 20h13v23H35z" fill="#4098dd" /><path d="M48 20h14v12H48z" fill="#74d2fb" /><path d="M48 32h14v12H48z" fill="#3f8fdc" /><path d="M36 32h12v16H36z" fill="#2d66bd" /><path d="M36 44h16l-8 8zM40 48l24 14V40z" fill="#2f72cc" opacity=".7" /><rect x="7" y="24" width="28" height="28" rx="3" fill="#2b62c3" /><text x="21" y="46" text-anchor="middle" class="ol">O</text>
          </template>
          <template v-else-if="i === 9">
            <rect width="76" height="76" rx="18" fill="#fff" /><circle cx="39" cy="20" r="8" fill="#7b80e0" /><circle cx="56" cy="22" r="5.500" fill="#5159c4" /><path d="M50 32h15v16a9 9 0 01-15 7z" fill="#5058c2" /><path d="M24 32h30v17a14 14 0 01-28 5z" fill="#7b80e0" /><rect x="9" y="24" width="29" height="28" rx="3" fill="#4547b0" /><text x="23.500" y="46" text-anchor="middle" class="ol">T</text>
          </template>
          <template v-else-if="i === 10">
            <rect width="76" height="76" rx="18" fill="#fff" /><rect x="20" y="12" width="43" height="51" rx="3" fill="#3f78cf" /><path d="M20 25V15a3 3 0 013-3h37a3 3 0 013 3v10z" fill="#5ba1e8" /><path d="M20 38h43v12H20z" fill="#2a57b4" /><path d="M20 50h43v10a3 3 0 01-3 3H23a3 3 0 01-3-3z" fill="#1d3c88" /><rect x="7" y="24" width="28" height="28" rx="3" fill="#2450ac" /><text x="21" y="45.500" text-anchor="middle" class="ol">W</text>
          </template>
          <template v-else-if="i === 11">
            <rect width="76" height="76" rx="18" fill="#fff" /><rect x="20" y="12" width="43" height="51" rx="3" fill="#4ea56b" /><path d="M42 12h18a3 3 0 013 3v10H42z" fill="#62c588" /><path d="M20 38h43v12H20z" fill="#2f7547" /><path d="M42 25h21v13H42z" fill="#4ea56b" /><path d="M42 38h21v12H42z" fill="#38824c" /><path d="M20 50h43v10a3 3 0 01-3 3H23a3 3 0 01-3-3z" fill="#2b5a38" /><path d="M20 25h22v13H20z" fill="#3c9059" /><rect x="7" y="24" width="28" height="28" rx="3" fill="#2e7240" /><text x="21" y="46" text-anchor="middle" class="ol">X</text>
          </template>
          <template v-else-if="i === 12">
            <rect width="76" height="76" rx="18" fill="#fff" /><circle cx="39" cy="38" r="25.500" fill="#dd7350" /><path d="M39 12.500A25.500 25.500 0 0164.500 38H39z" fill="#f09374" /><path d="M13.500 38h51a25.500 25.500 0 01-51 0z" fill="#c4593a" /><rect x="9" y="24" width="28" height="28" rx="3" fill="#b63f22" /><text x="23" y="46" text-anchor="middle" class="ol">P</text>
          </template>
          <template v-else-if="i === 13">
            <rect width="76" height="76" rx="18" fill="#fff" /><path d="M50 12L49 28 16 53q-2 1-4-1l-1-2q-1-2 1-3z" fill="#2763a5" /><path d="M50 64L49 48 16 24q-2-1-4 1l-1 2q-1 2 1 3z" fill="#3379c8" /><path d="M50 11l14 7v40l-14 7z" fill="#489ae6" />
          </template>
          <template v-else-if="i === 14">
            <rect width="76" height="76" rx="18" fill="#fff" /><path d="M11 26l7-5v34l-7-5z" fill="#53408a" /><path d="M48 12l2 16L24 57l-8-7z" fill="#6a4da5" /><path d="M11 26l15-7 24 29v17l-8-6z" fill="#9c78d4" /><path d="M50 11l14 7v40l-14 7z" fill="#bd90f0" />
          </template>
          <g v-else-if="i === 15" transform="translate(-4 1)">
            <path d="M26-5L2 12l6 60 22 8 26-16-4-52z" fill="url(#gRd)" /><path d="M26-5L2 12l12 10 20-12z" fill="#d8315e" /><path d="M26-5l18 14-10 8-12-2z" fill="#e8743a" /><path d="M54-4l6 24H38z" fill="#3a6cf0" /><path d="M58 12l26 14-8 14 8 22-20 10z" fill="#9b2a66" /><path d="M62 14l22 12-10 12z" fill="#cd2c55" /><path d="M42 64l38-8 4 10-24 14z" fill="#2454f0" /><path d="M8 70l26-4-4 14z" fill="#f0a544" />
            <rect x="15" y="11" width="53" height="53" fill="#0b0509" /><text x="21" y="37" class="jb">RD</text><path d="M22 56h20" stroke="#fff" stroke-width="4" />
          </g>
          <g v-else-if="i === 16" transform="translate(-4 1)">
            <path d="M38-5L8 8 2 62l32 18 22-18 4-56z" fill="url(#gPc)" /><path d="M66-4L40 12h26z" fill="#6ee052" /><path d="M66 14l18 14-13 14z" fill="#52dff0" /><path d="M76 32l9 40-27 8-34-10 30-14z" fill="#e9f75a" /><path d="M38-5l14 17H26z" fill="#55dd92" />
            <rect x="15" y="11" width="53" height="53" fill="#050806" /><text x="21" y="37" class="jb">PC</text><path d="M22 56h20" stroke="#fff" stroke-width="4" />
          </g>
          <g v-else-if="i === 17" transform="translate(-4 1)">
            <path d="M22-5L0 6l8 54 4 12 46 8 8-16 18-14-10-14 10-12-8-26-26-3-6 4z" fill="url(#gWs)" /><path d="M56-5l18 1 6 14-18 2-24 2z" fill="#eff35c" /><path d="M72 6l12 16-16 14z" fill="#56aee8" /><path d="M22-5l18 10-20 12L0 6z" fill="#5ad2f3" /><path d="M16 64l44-2-2 18-46-8z" fill="#2b68ee" />
            <rect x="15" y="11" width="53" height="53" fill="#03090c" /><text x="20" y="37" class="jb">WS</text><path d="M22 56h20" stroke="#fff" stroke-width="4" />
          </g>
          <template v-else>
            <rect width="76" height="76" rx="18" fill="url(#gApp)" /><g stroke="#fff" stroke-width="6" stroke-linecap="round"><path d="M41 17L24 46M35 17l24 40M14 47h46M20 56l-2 4" /></g>
          </template>
        </svg>
        <span v-if="i === 1" class="count">1</span>
        <i v-if="running.includes(i)" class="dot"></i>
      </div>
      <i class="sep"></i>
      <svg class="csv" width="80" height="82" viewBox="0 0 80 82"><path d="M6 20h8v8H6z" fill="#3458d0" /><path d="M14 4h40l20 40v20H14z" fill="#e4e4e4" /><path d="M17 0h25q6 0 8 8l10 36H17z" fill="#f4f4f4" stroke="#cfcfcf" /><path d="M0 20h56l2 22h22v39H2a2 2 0 01-2-2z" fill="#f1f1f1" /><path d="M46 2q8 2 12 16l22 24q-2-2-20-1-1-20-14-39z" fill="#fff" stroke="#c8c8c8" /><path d="M4 25h17M4 28h18M4 31h16M27 25h29M27 28h30M27 31h30" stroke="#aaa" stroke-width="1.300" /><text x="40" y="73" text-anchor="middle" font-size="9.500" font-weight="500" fill="#666" font-family="Inter, sans-serif">CSV</text></svg>
      <svg class="trash" width="68" height="88" viewBox="0 0 68 88"><ellipse cx="34" cy="12" rx="32" ry="8" fill="#c9cbcc" /><path d="M8 12l8-8 8 4 6-7 8 10 6-8 12 6 6 6-12 6H14z" fill="#f4f4f4" /><path d="M12 14l8-8 4 10zM40 14l6-8 10 8zM28 10l6-5 2 10z" fill="#5b5a58" /><path d="M23 8l6 2-3 5z" fill="#35b5a0" /><path d="M46 10l5 4-6 3z" fill="#3556b0" /><path d="M15 14l7-4-2 7z" fill="#a0483a" /><path d="M1 12q33 14 66 0l-7 68q-4 8-26 8T8 80z" fill="url(#gTrash)" /><path d="M1 12q33 14 66 0" fill="none" stroke="#f6f6f6" stroke-width="2" /></svg>
    </footer>
  </div>
</template>

<style>
body { margin: 0; }
</style>

<style scoped>
* { box-sizing: border-box; }
.desktop { position: relative; width: 2560px; height: 1600px; overflow: hidden; background: #040c15; font-family: Roboto, "Liberation Sans", sans-serif; color: #000; }
svg { display: block; flex: none; }
span, b, a, em { white-space: nowrap; }
i, em { font-style: normal; }
ul, h1, h2, p { margin: 0; padding: 0; list-style: none; font-weight: 400; white-space: nowrap; }
a { color: #4065ce; border-bottom: 2px solid #4065ce; white-space: pre; }
.wallpaper { position: absolute; inset: 0; }

.menubar { position: relative; height: 48px; display: flex; align-items: center; padding: 0 38px; background: linear-gradient(90deg, #122445, #0c2144 45%, #071a3c 75%, #05153a); color: #e8e9ec; font: 500 26px/46px Inter, sans-serif; }
.apple { margin-top: -4px; margin-right: 38px; }
.menus { display: grid; grid-template-columns: 142px 108px 166px 194px 147px 159px 157px 147px 105px 120px; height: 46px; margin-top: -2px; letter-spacing: -.3px; }
.menus b { font-weight: 700; }
.status { margin-left: auto; display: flex; align-items: center; height: 48px; }
.lang { width: 32px; height: 32px; margin-right: 38px; border-radius: 5px; background: #e8e9ec; color: #0a1d40; text-align: center; font: 500 26px/32px Inter, sans-serif; }
.status svg:nth-of-type(1) { margin-right: 35px; }
.status svg:nth-of-type(2) { margin-right: 37px; }
.status svg:nth-of-type(3) { margin-right: 37px; }
.status svg:nth-of-type(4) { margin-right: 31px; }
.status svg:nth-of-type(5) { margin-right: 32px; }
.date { width: 146px; height: 48px; letter-spacing: .75px; }
.time { width: 70px; height: 48px; letter-spacing: 1.7px; }

.backwin { position: absolute; left: 20px; top: 89px; width: 2520px; height: 1331px; border-radius: 22px; background: #353637; border: 2px solid #5b5b5c; box-shadow: 0 0 0 1px #000, 0 20px 50px rgba(0, 0, 0, .4); }
.win { position: absolute; left: 28px; top: 102px; width: 2514px; height: 1368px; border-radius: 22px; overflow: hidden; background: #fff; display: flex; flex-direction: column; }
.strip { height: 84px; background: #dfe1e5; display: flex; border-top: 2px solid #eef0f3; flex: none; }
.lights { display: flex; gap: 16px; padding: 29px 0 0 42px; width: 186px; }
.lights i { width: 24px; height: 24px; border-radius: 50%; }
.lights .r { background: #ed6b60; } .lights .y { background: #f5bf50; } .lights .g { background: #62c655; }
.tab { position: relative; margin-top: 14px; width: 480px; height: 68px; border-radius: 16px 16px 0 0; background: #fff; display: flex; align-items: center; padding-left: 27px; }
.tab::before, .tab::after { content: ""; position: absolute; bottom: 0; width: 16px; height: 16px; }
.tab::before { left: -16px; background: radial-gradient(circle at 0 0, transparent 15.500px, #fff 16px); }
.tab::after { right: -16px; background: radial-gradient(circle at 100% 0, transparent 15.500px, #fff 16px); }
.tabtitle { flex: none; margin-left: 19px; width: 358px; font: 400 24px/34px Inter, sans-serif; letter-spacing: -.1px; color: #3c4043; -webkit-mask-image: linear-gradient(90deg, #000 305px, transparent 352px); mask-image: linear-gradient(90deg, #000 305px, transparent 352px); }
.tabx { margin-left: 9px; }
.plus { margin: 36px 0 0 32px; }
.chev { margin: 43px 34px 0 auto; }

.toolbar { height: 72px; display: flex; align-items: center; padding: 0 40px 0 24px; flex: none; }
.toolbar > svg:nth-of-type(1) { margin-right: 25px; }
.toolbar > svg:nth-of-type(2) { margin-right: 23px; }
.omni { flex: none; width: 2081px; height: 56px; margin: 0 31px 0 24px; border-radius: 28px; background: #f1f3f4; display: flex; align-items: center; padding-left: 26px; }
.url { flex: none; width: 1857px; margin-left: 22px; font: 400 28px/40px Inter, sans-serif; color: #5f6368; letter-spacing: .06px; }
.url em { color: #202124; letter-spacing: -.06px; }
.omni > svg:nth-of-type(2) { margin-left: -22px; margin-right: 36px; }
.omni > svg:nth-of-type(3) { margin-right: 34px; }
.ava { flex: none; border-radius: 50%; background: #4196a5; color: #fff; text-align: center; }
.small { width: 44px; height: 44px; margin: 0 auto 0 28px; font: 400 24px/44px Roboto; }

.bookmarks { height: 66px; border-bottom: 2px solid #dadbdc; display: flex; align-items: center; padding: 0 0 9px 32px; font: 400 24px/34px Inter, sans-serif; color: #3c4043; flex: none; }
.gm { width: 99px; margin-left: 20px; } .yt { width: 130px; margin-left: 18px; letter-spacing: -.4px; } .mp { width: 107px; margin-left: 15px; letter-spacing: -.3px; } .trn { margin-left: 17px; }

.promo { height: 100px; display: flex; align-items: center; padding: 0 24px 0 46px; color: #555; flex: none; }
.promo svg { margin-bottom: 4px; }
.promotext { margin-left: 46px; font-size: 24px; line-height: 36px; letter-spacing: -.01px; }
.dismiss { margin-left: auto; margin-right: 40px; color: #000; font-weight: 500; font-size: 26px; }
.activate { width: 167px; height: 64px; border-radius: 6px; background: #4065ce; color: #fff; text-align: center; font: 500 26px/64px Roboto; box-shadow: 0 3px 5px rgba(0, 0, 0, .35); }

.cloudbar { position: relative; height: 96px; background: #3871e0; color: #fff; display: flex; align-items: center; padding: 0 40px 0 46px; box-shadow: 0 2px 16px rgba(0, 0, 0, .5); flex: none; }
.burger { width: 36px; display: grid; gap: 6px; }
.burger i { height: 4px; background: #fff; }
.logo { width: 282px; margin-left: 40px; margin-top: -3px; display: flex; font: 400 41px/50px Lato, sans-serif; letter-spacing: -.6px; white-space: nowrap; }
.logo b { width: 134px; font-weight: 400; -webkit-text-stroke: 1.2px #fff; letter-spacing: -.4px; }
.projname { width: 220px; margin-left: 12px; margin-right: 18px; font-size: 28px; }
.search { width: 1284px; height: 72px; margin: 0 50px 0 68px; border: 2px solid #fff; border-radius: 16px; display: flex; align-items: center; padding-left: 35px; font-size: 29px; letter-spacing: .65px; }
.search b { font-weight: 500; margin-left: 18px; width: 118px; letter-spacing: .4px; }
.badge { width: 52px; height: 52px; margin: 0 37px 0 40px; border: 6.500px solid #5ac0a8; border-radius: 50%; background: #fff; color: #3871e0; font: 700 26px/39px Roboto; text-align: center; }
.cloudbar > svg:last-of-type { margin: 0 43px 0 58px; }
.big { width: 64px; height: 64px; font: 400 36px/64px Roboto; }

.body { height: 836px; display: grid; grid-template-columns: 512px 1fr; flex: none; }
.side { border-right: 2px solid #dedede; display: flex; flex-direction: column; }
.sidehead { height: 98px; border-bottom: 2px solid #dedede; display: flex; align-items: center; padding-left: 40px; gap: 40px; font-size: 36px; flex: none; }
.sidelist { position: relative; height: 446px; border-bottom: 2px solid #dedede; overflow: hidden; padding-top: 16px; flex: none; }
.sidelist li { height: 80px; display: grid; grid-template-columns: 128px 1fr; align-items: center; font-size: 26px; }
.sidelist li svg { justify-self: center; }
.sidelist li.sel { width: 478px; background: #f1f5fe; }
.thumb { position: absolute; right: 2px; top: 2px; width: 18px; height: 132px; background: #c9c9c9; border: 2px solid #b4b4b4; border-right: 0; }
.foot { height: 98px; border-bottom: 2px solid #dedede; display: grid; grid-template-columns: 127px 1fr; align-items: center; font-size: 26px; color: #555; flex: none; }
.foot svg { justify-self: center; }
.last { border-bottom: 0; height: 96px; grid-template-columns: 124px 1fr; }

.page { position: relative; display: flex; flex-direction: column; }
.pagehead { height: 98px; border-bottom: 2px solid #dedede; display: flex; align-items: center; padding: 0 56px 0 40px; }
.pagehead h1 { margin-left: 56px; margin-right: auto; font-size: 36px; }
.help { margin-left: 9px; color: #4065ce; font-weight: 500; font-size: 26px; }
.tabs { height: 74px; border-bottom: 2px solid #dedede; display: flex; font: 500 26px/72px Roboto; color: #555; }
.tabs span { height: 71px; padding-left: 48px; }
.details { width: 196px; } .permissions { width: 266px; } .keys { width: 158px; } .metrics { width: 206px; }
.tabs .on { color: #4065ce; border-bottom: 4px solid #4065ce; padding-left: 47px; }
.content { position: relative; padding: 0 80px 0 48px; font-size: 26px; line-height: 40px; }
h2 { font-size: 35px; font-weight: 500; line-height: 40px; margin-top: 25px; }
.notice { margin-top: 21px; width: 1874px; height: 116px; border-radius: 8px; background: #f1f1f1; display: flex; align-items: center; padding-left: 53px; }
.notice > div { margin-left: 51px; }
.notice svg { margin-top: -10px; }
.p1 { margin-top: 32px; } .p2 { margin-top: 32px; }
.addkey { margin-top: 32px; width: 195px; height: 64px; border-radius: 8px; background: #fff; box-shadow: 0 3px 6px rgba(0, 0, 0, .4), 0 0 4px rgba(0, 0, 0, .12); display: flex; align-items: center; padding-left: 24px; color: #4065ce; font-weight: 500; }
.addkey span { width: 121px; }
.table { margin-top: 40px; width: 1874px; }
.tr.head, .tr.row { display: grid; grid-template-columns: 115px 178px 629px 250px 281px 1fr; align-items: center; height: 58px; padding-left: 32px; border-bottom: 2px solid #dedede; }
.head { background: #f4f4f4; color: #6c6c6c; font-weight: 500; font-size: 24px; }
.row { color: #555; }
.hex { margin-left: 2px; }
.act { display: flex; align-items: center; gap: 7px; }
.act svg { margin-left: 2px; }
.bigthumb { position: absolute; right: 2px; top: 25px; width: 18px; height: 589px; background: #c9c9c9; border: 2px solid #b4b4b4; border-right: 0; }

.downloads { height: 112px; border-top: 2px solid #dadbdc; display: flex; align-items: center; padding: 0 26px 0 41px; font: 400 26px/40px Inter, sans-serif; color: #3c4043; flex: none; }
.wsmini { margin-bottom: 2px; }
.file { width: 317px; margin: 3px 0 0 27px; }
.vline { width: 2px; height: 88px; margin-left: 37px; background: #cfcfcf; }
.showall { margin-left: auto; margin-right: 26px; margin-bottom: 1px; width: 226px; height: 64px; border: 2px solid #dadce0; border-radius: 8px; color: #3871e0; font: 500 24px/59px Roboto, sans-serif; letter-spacing: .55px; text-align: center; }

.dock { position: absolute; left: 223px; top: 1474px; width: 2114px; height: 116px; border: 2px solid #717b87; border-radius: 34px; background: #565f6b; display: flex; align-items: flex-start; padding: 15px 0 0 14px; box-shadow: 0 0 0 1px rgba(0, 0, 0, .3), 0 0 80px rgba(0, 0, 0, .34); }
.defs { position: absolute; }
.slot { position: relative; width: 76px; height: 76px; margin-right: 22px; flex: none; }
.slot > svg { overflow: visible; filter: drop-shadow(0 1px 2px rgba(0, 0, 0, .35)); }
.ol { font: 700 21px Lato, sans-serif; fill: #fff; }
.jb { font: 700 27px "Open Sans", sans-serif; fill: #fff; }
.count { position: absolute; left: 51px; top: -9px; width: 36px; height: 36px; border-radius: 50%; background: #e25141; color: #fff; font: 400 22px/36px Inter, sans-serif; text-align: center; }
.dot { position: absolute; left: 33px; top: 87px; width: 8px; height: 8px; border-radius: 50%; background: #000; }
.sep { width: 2px; height: 84px; margin-left: 13px; background: #2e3640; }
.csv { margin: -8px 0 0 29px; }
.trash { margin: -8px 0 0 24px; }
</style>
